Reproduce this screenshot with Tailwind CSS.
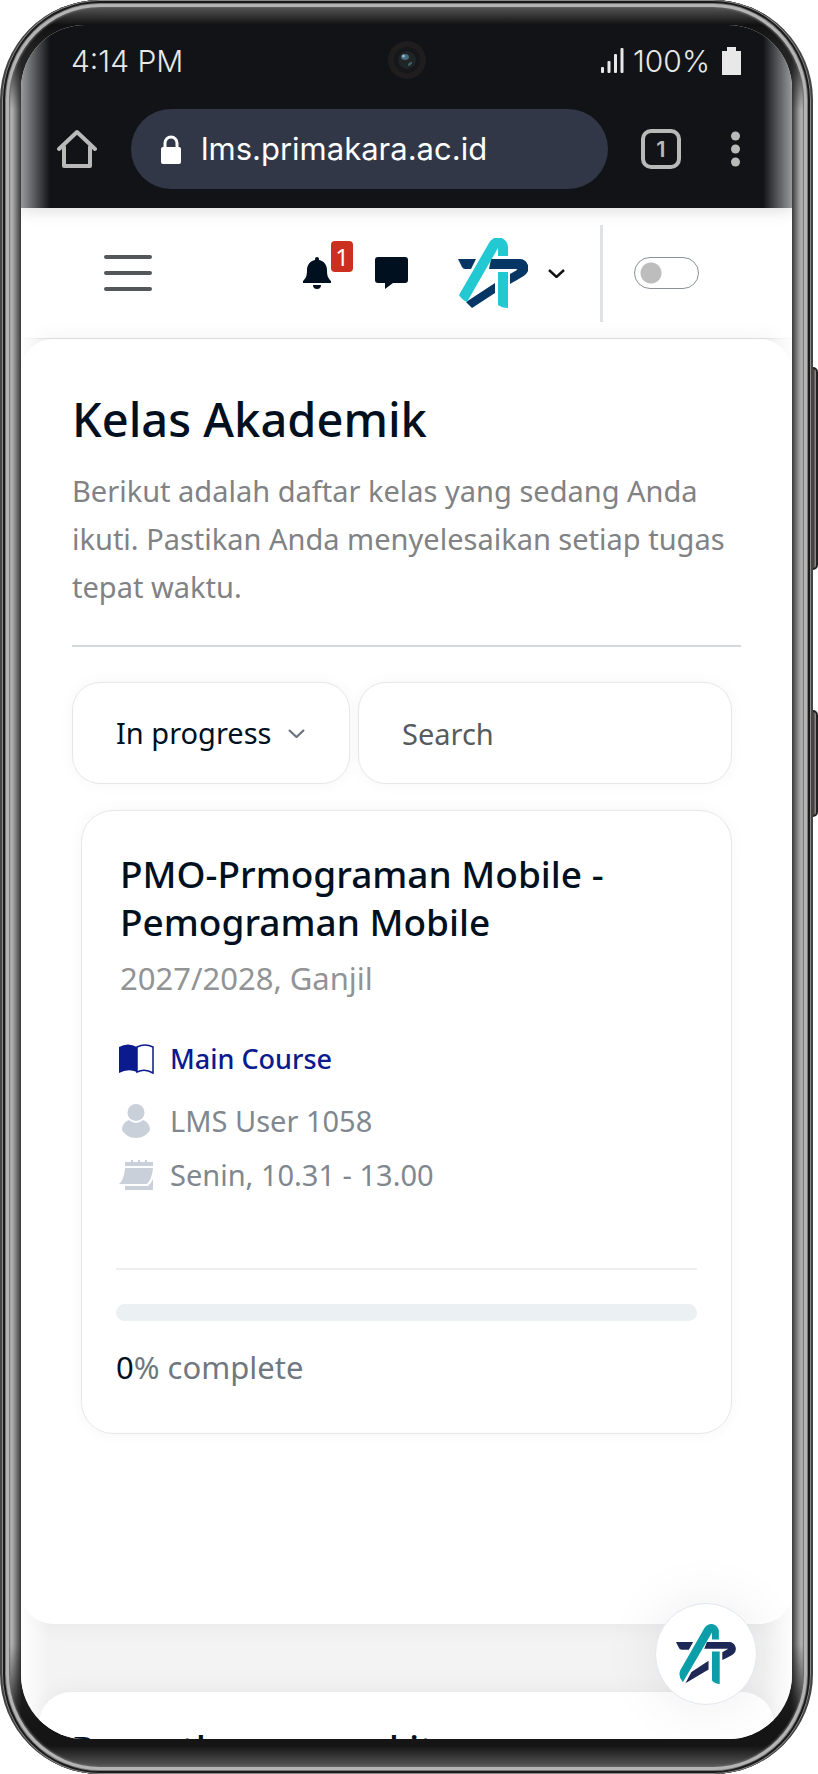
<!DOCTYPE html>
<html lang="id">
<head>
  <meta charset="UTF-8" />
  <meta name="viewport" content="width=device-width, initial-scale=1.0">
  <title>Kelas Akademik</title>
  <script src="https://cdn.jsdelivr.net/npm/@tailwindcss/browser@4"></script>
</head>
<body class="bg-white h-screen overflow-hidden font-['Noto_Sans',sans-serif] text-[#00101f]">

  <!-- Phone -->
  <div class="relative h-full pr-[5px]">
    <div class="absolute right-0 top-[367px] h-[203px] w-[10px] rounded-md border-2 border-[#222] bg-[linear-gradient(to_right,#222,#333_50%,#9a9590)]"></div>
    <div class="absolute right-0 top-[710px] h-[107px] w-[10px] rounded-md border-2 border-[#222] bg-[linear-gradient(to_right,#222,#333_50%,#9a9590)]"></div>

    <div class="relative h-full rounded-[100px] pt-[25px] pb-[35px] px-[19px] border-x-2 border-[#444] shadow-[inset_0_0_0_1px_#8a8a8a,inset_0_0_0_3px_#1a1a1a,inset_0_0_0_4px_#777,inset_0_0_0_7px_#b4b4b4,inset_0_0_2px_8px_#666] bg-[linear-gradient(to_bottom,#4a4a4a_10px,#111_25px,#222_50px,transparent_110px,transparent_calc(100%-130px),#151515_calc(100%-50px),#151515_calc(100%-28px),#555_calc(100%-8px)),linear-gradient(to_right,#555_4px,#c4c4c4_8px,#999_12px,#2b2b2b_20px,#2b2b2b_calc(100%-20px),#999_calc(100%-12px),#c4c4c4_calc(100%-8px),#555_calc(100%-4px))]">

      <!-- Screen -->
      <div class="relative h-full overflow-hidden rounded-[64px] bg-[#f3f3f3] flex flex-col">

        <!-- Browser bar -->
        <header class="relative z-10 shrink-0 pb-[19px] font-[Inter,sans-serif] shadow-[0_2px_16px_rgba(0,0,0,0.15)] bg-[linear-gradient(to_right,#98999b,#121317_29px,#121317_calc(100%-29px),#98999b)]">
          <div class="h-[72px] pl-[50px] pr-[50px] flex items-center justify-between text-[30px] text-[#e8e8e8] font-light">
            <span>4:14 PM</span>
            <div class="flex items-center">
              <svg class="w-6 h-7 mr-2" viewBox="0 0 24 28" fill="#e8e8e8">
                <rect x="0" y="20" width="3" height="6" rx="1"/><rect x="6.500" y="14" width="3" height="12" rx="1"/><rect x="13" y="7" width="3" height="19" rx="1"/><rect x="19.500" y="1" width="3" height="25" rx="1"/>
              </svg>
              <span>100%</span>
              <svg class="w-5 h-7 ml-3" viewBox="0 0 20 28" fill="#e8e8e8"><path d="M5 0h9v4h5v24H0V4h5z"/></svg>
            </div>
          </div>
          <div class="absolute left-1/2 top-4 -translate-x-1/2 size-[38px] rounded-full bg-[#1f1d1d] flex items-center justify-center">
            <svg class="size-7" viewBox="0 0 28 28"><circle cx="14" cy="14" r="13" fill="#15171a"/><circle cx="14" cy="14" r="9" fill="#202426"/><ellipse cx="12" cy="11" rx="4" ry="3" fill="#456b7c"/><circle cx="10.500" cy="10" r="1.500" fill="#8fb8c8"/><path d="M15 20q4-1 4-4-4 0-4 4z" fill="#3c6968"/></svg>
          </div>
          <div class="mt-3 pl-9 pr-[52px] flex items-center">
            <button aria-label="Home">
              <svg class="size-10" viewBox="0 0 40 40" fill="none" stroke="#b9b9ba" stroke-width="4" stroke-linejoin="round" stroke-linecap="round"><path d="M2 20 20 3l18 17M7 18v19h26V18"/></svg>
            </button>
            <div class="ml-[34px] mr-[33px] grow h-20 pl-[30px] rounded-full bg-[#313747] flex items-center gap-5 text-[31px] text-white">
              <svg class="w-5 h-[29px] shrink-0" viewBox="0 0 20 29"><rect y="12" width="20" height="17" rx="2" fill="#fff"/><path d="M4 13V8a6 6 0 0 1 12 0v5" fill="none" stroke="#fff" stroke-width="3"/></svg>
              <input type="text" aria-label="Address" value="lms.primakara.ac.id" class="w-full bg-transparent outline-none">
            </div>
            <button class="size-10 shrink-0 rounded-[10px] border-4 border-[#b9b9ba] text-[#b9b9ba] text-[22px] leading-none font-semibold">1</button>
            <button aria-label="Menu" class="ml-[50px]">
              <svg class="w-[9px] h-9" viewBox="0 0 9 36" fill="#b9b9ba"><circle cx="4.500" cy="5" r="4.500"/><circle cx="4.500" cy="18" r="4.500"/><circle cx="4.500" cy="31" r="4.500"/></svg>
            </button>
          </div>
        </header>

        <!-- Site nav -->
        <nav class="shrink-0 h-[131px] pl-[83px] pr-[93px] bg-white border-b border-[#dfe3e6] flex items-center">
          <button aria-label="Open menu">
            <svg class="w-12 h-9" viewBox="0 0 48 36" stroke="#53585a" stroke-width="4" stroke-linecap="round"><path d="M2 2h44M2 18h44M2 34h44"/></svg>
          </button>
          <button aria-label="Notifications" class="relative ml-auto">
            <svg class="w-7 h-8" viewBox="0 0 28 32" fill="#00101f"><path d="M14 0a2 2 0 0 1 2 2v1c5 1 8 5 8 10 0 6 1 8 4 11v2H0v-2c3-3 4-5 4-11C4 8 7 4 12 3V2a2 2 0 0 1 2-2zM10 28h8a4 4 0 0 1-8 0z"/></svg>
            <span class="absolute left-7 -top-4 w-[22px] h-[31px] rounded-sm bg-[#cb2f20] text-white text-2xl leading-[31px]">1</span>
          </button>
          <button aria-label="Messages" class="ml-11">
            <svg class="w-[33px] h-8" viewBox="0 0 33 32" fill="#00101f"><path d="M3 0h27a3 3 0 0 1 3 3v20a3 3 0 0 1-3 3H18l-8 6v-6H3a3 3 0 0 1-3-3V3a3 3 0 0 1 3-3z"/></svg>
          </button>
          <button aria-label="User menu" class="ml-[50px] flex items-center gap-5">
            <svg class="size-[70px]" viewBox="0 0 70 70">
              <path d="M0 21h18l-5 10H7q-2 0-3-2zM33 21h28a9 9 0 0 1 6 16q-1 1-15 9V36l7-4q1-1-1-1H31zM37 45v10L14 70l-6-6z" fill="#063764"/>
              <path d="M1 57 31 5a10 10 0 0 1 19 5v8H40v-8L9 64Q4 62 1 57zM40 34h10v36q-6 0-10-3z" fill="#22c9d3"/>
            </svg>
            <svg class="w-[17px] h-[9px]" viewBox="0 0 17 9" fill="none" stroke="#111" stroke-width="2.400"><path d="M1 1l7.500 7L16 1"/></svg>
          </button>
          <div class="ml-[35px] mr-[31px] w-[3px] h-[97px] bg-[#dfe3e6]"></div>
          <input type="checkbox" role="switch" aria-label="Dark mode" class="appearance-none w-[65px] h-8 rounded-full border border-[#8c9197] bg-[radial-gradient(circle_at_16px_50%,#bdbdbd_10px,transparent_11px)]">
        </nav>

        <!-- Class list -->
        <main class="shrink-0 h-[1285px] pl-[51px] pr-[51px] pt-[50px] bg-white rounded-[32px] shadow-[0_0_24px_rgba(0,0,0,0.06)]">
          <h1 class="text-[47px] leading-[60px] font-medium">Kelas Akademik</h1>
          <p class="mt-[18px] pb-[34px] border-b-2 border-[#d5d9db] text-[29px] leading-[48px] text-[#808284]">Berikut adalah daftar kelas yang sedang Anda ikuti. Pastikan Anda menyelesaikan setiap tugas tepat waktu.</p>

          <div class="mt-[35px] mr-[9px] flex gap-2 text-[29px]">
            <div class="relative w-[278px] shrink-0">
              <select aria-label="Filter" class="appearance-none w-full h-[102px] pl-[43px] rounded-[28px] border border-[#e6e7e8] bg-white shadow-[0_0_16px_rgba(0,0,0,0.04)]">
                <option>In progress</option>
              </select>
              <svg class="absolute right-[45px] top-[47px] w-[17px] h-[9px]" viewBox="0 0 17 9" fill="none" stroke="#6a737b" stroke-width="2.200"><path d="M1 1l7.500 7L16 1"/></svg>
            </div>
            <input type="search" aria-label="Search" placeholder="Search" class="min-w-0 grow h-[102px] px-[43px] rounded-[28px] border border-[#e6e7e8] bg-white shadow-[0_0_16px_rgba(0,0,0,0.04)] placeholder:text-[#565b5e]">
          </div>

          <article class="mt-[26px] mx-[9px] px-[34px] pt-[39px] pb-[42px] rounded-[32px] border border-[#e6e7e8] shadow-[0_0_16px_rgba(0,0,0,0.04)]">
            <h2 class="px-1 text-[37px] leading-[48px] font-medium">PMO-Prmograman Mobile - Pemograman Mobile</h2>
            <p class="px-1 mt-2 text-[31px] leading-[48px] text-[#919394]">2027/2028, Ganjil</p>

            <div class="mt-[33px] px-0.5 flex items-center gap-4 text-[27px] leading-[48px] text-[#0b1a8c] font-medium">
              <svg class="w-9 h-[30px]" viewBox="0 0 36 30"><path d="M1 3Q10-2 19 3v25q-9-4-18 1z" fill="#0b1a8c"/><path d="M19 3q8-4 16 0v26q-8-5-16-1z" fill="none" stroke="#0b1a8c" stroke-width="1.500"/></svg>
              <a href="#">Main Course</a>
            </div>
            <div class="mt-[14px] px-0.5 flex items-center gap-4 text-[29px] leading-[48px] text-[#80878e]">
              <svg class="w-9 h-[34px]" viewBox="0 0 36 34" fill="#c9d0d9"><circle cx="18" cy="8.500" r="8.500"/><path d="M11 16q7 6 14 0c5 2 7 6 7 10-3 5-8 8-14 8S7 31 4 26c0-4 2-8 7-10z"/></svg>
              <span>LMS User 1058</span>
            </div>
            <div class="mt-1.5 px-0.5 flex items-center gap-4 text-[29px] leading-[48px] text-[#80878e]">
              <svg class="w-9 h-[30px]" viewBox="0 0 36 30" fill="#c9d0d9"><path d="M7 2h6V0h2v2h5V0h2v2h5V0h2v2h6v4H7zM7 8h28q-1 11-6 16H1Q6 20 7 8zM35 19v11H7v-4h23q3-2 5-7z"/></svg>
              <span>Senin, 10.31 - 13.00</span>
            </div>

            <div class="mt-[69px] border-t-2 border-[#edeeef] pt-[34px]">
              <div role="progressbar" aria-valuenow="0" aria-valuemin="0" aria-valuemax="100" aria-label="Progress" class="h-[17px] rounded-full bg-[#ebf0f3]"></div>
              <p class="mt-[22px] text-[31px] leading-[48px] text-[#6f7880]"><span class="text-[#00101f]">0</span>% complete</p>
            </div>
          </article>
        </main>

        <!-- Recent items -->
        <section class="shrink-0 mt-[68px] mx-[18px] pl-8 pt-[33px] pb-8 rounded-[32px] bg-white shadow-[0_0_24px_rgba(0,0,0,0.06)]">
          <h2 class="text-[38px] leading-[48px] font-medium">Recently accessed items</h2>
        </section>

        <!-- Soft fade along the curved glass edges -->
        <div class="pointer-events-none absolute inset-x-0 bottom-0 top-[183px] bg-[linear-gradient(to_right,rgba(255,255,255,0.9),transparent_29px,transparent_calc(100%-29px),rgba(255,255,255,0.9))]"></div>

        <button aria-label="Help" class="absolute right-[35px] bottom-[34px] size-[102px] rounded-full bg-white border border-[#e2e7ee] flex items-center justify-center shadow-[0_0_60px_rgba(0,0,0,0.08)]">
          <svg class="size-[60px]" viewBox="0 0 70 70">
            <path d="M0 21h20l-5 9H7q-3 0-4-3zM36 21h26a8 8 0 0 1 5 14q-2 2-13 7v-9l7-4H33zM38 43v10L11 69l7-13z" fill="#1d2856"/>
            <path d="M5 54 33 5a9 9 0 0 1 17 5v8h-8v-8L8 68Q2 61 5 54zM42 32h9v38q-6 0-9-4z" fill="#0a9ea8"/>
          </svg>
        </button>
      </div>
    </div>
  </div>

</body>
</html>
